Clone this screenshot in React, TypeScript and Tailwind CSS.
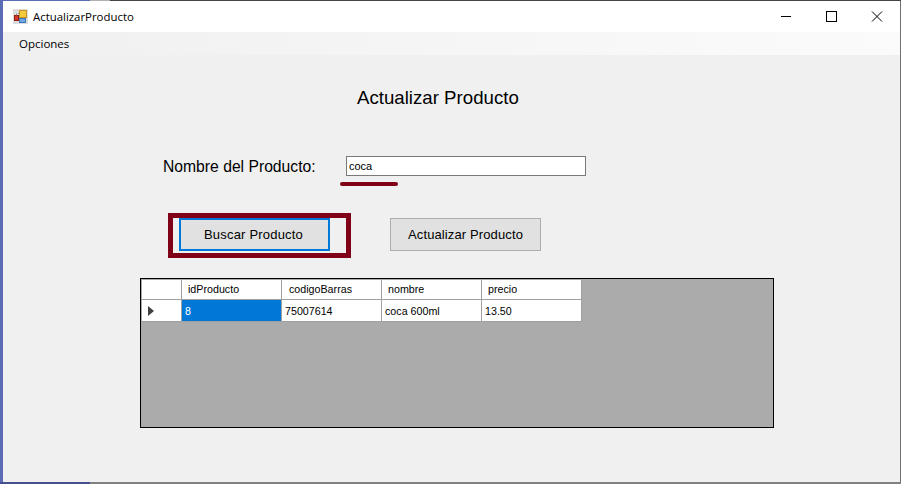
import React from 'react';

const rows = [{ id: '8', codigo: '75007614', nombre: 'coca 600ml', precio: '13.50' }];

const AppIcon = () => (
  <svg width="15" height="15" viewBox="0 0 15 15" className="shrink-0">
    <rect x="0" y="0" width="15" height="15" fill="#dcdcdc" />
    <rect x="6.5" y="1.5" width="7" height="7" fill="#f5c93c" stroke="#c9952a" />
    <rect x="1.5" y="6.5" width="4" height="5" fill="#d8342a" stroke="#8c1d18" />
    <rect x="6.5" y="9.5" width="6" height="4" fill="#6ea6e6" stroke="#3a78bd" />
    <path d="M5 4.5h1.5M3.5 4.5v2M6 11.5h1" stroke="#8a8a8a" fill="none" />
  </svg>
);

const HeaderCell = ({ label, pad = 'pl-[6px]' }: { label: string; pad?: string }) => (
  <div className={`w-[100px] h-[19px] bg-white border-r border-[#a0a0a0] flex items-center ${pad}`}>{label}</div>
);

const BodyCell = ({ value, selected }: { value: string; selected?: boolean }) => (
  <div className={`w-[100px] h-[22px] border-r border-b border-[#a0a0a0] flex items-center pl-[3px] pt-[1px] ${selected ? 'bg-[#0078d7] text-white' : 'bg-white text-black'}`}>
    {value}
  </div>
);

export default function App() {
  return (
    <div className="w-[901px] h-[484px] overflow-hidden flex flex-col bg-[#f0f0f0] text-black font-['Liberation_Sans',Arial,sans-serif]">
      <div className="h-[1px] flex shrink-0">
        <div className="w-[90px] bg-[#5b6bb5]" />
        <div className="w-[20px] bg-[#b0b0b0]" />
        <div className="flex-1 bg-[#444444]" />
      </div>
      <div className="flex-1 flex min-h-0">
        <div className="w-[3px] bg-[#5b6bb5] shrink-0" />
        <div className="flex-1 flex flex-col min-w-0">
          {/* title bar */}
          <div className="h-[31px] bg-white flex items-center shrink-0">
            <div className="ml-[10px] flex items-center">
              <AppIcon />
              <span className="ml-[5px] text-[11.4px] font-['Open_Sans',sans-serif]">ActualizarProducto</span>
            </div>
            <div className="ml-auto flex items-center text-black">
              <svg width="46" height="31" viewBox="0 0 46 31"><path d="M18 15.5h10" stroke="#000" fill="none" /></svg>
              <svg width="46" height="31" viewBox="0 0 46 31" className="ml-[-1px]"><rect x="18.5" y="10.5" width="10" height="10" stroke="#000" fill="none" /></svg>
              <svg width="46" height="31" viewBox="0 0 46 31"><path d="M18 10.5l10 10M28 10.5l-10 10" stroke="#000" fill="none" /></svg>
            </div>
          </div>
          {/* menu */}
          <div className="h-[23px] bg-gradient-to-r from-[#f0f0f0] to-[#fbfbfb] flex items-center shrink-0 pl-[16px] text-[11.5px] font-['Open_Sans',sans-serif]">
            Opciones
          </div>
          {/* form */}
          <div className="flex-1 flex flex-col min-h-0">
            <h1 className="mt-[33px] ml-[354px] h-[20px] leading-[20px] text-[18.67px] whitespace-nowrap">Actualizar Producto</h1>
            <div className="mt-[48px] flex items-start">
              <label className="ml-[160px] w-[183px] h-[20px] leading-[22px] text-[15.7px] whitespace-nowrap">Nombre del Producto:</label>
              <div className="w-[240px] h-[20px] bg-white border border-[#7a7a7a] text-[11px] leading-[18px] pl-[2px]">coca</div>
            </div>
            <div className="mt-[6px] ml-[337px] w-[58px] h-[4px] rounded-full bg-[#800018] shrink-0" />
            <div className="mt-[27px] flex items-start">
              <div className="ml-[165px] w-[183px] h-[45px] border-[5px] border-[#800018] pl-[6px]">
                <button className="block w-[151px] h-[33px] bg-[#e1e1e1] border-2 border-[#0078d7] pr-[2px] text-[13px] tracking-[0.2px]">Buscar Producto</button>
              </div>
              <button className="ml-[39px] mt-[5px] w-[151px] h-[33px] bg-[#e1e1e1] border border-[#adadad] text-[13px] tracking-[0.12px]">Actualizar Producto</button>
            </div>
            {/* grid */}
            <div className="mt-[20px] ml-[137px] w-[634px] h-[150px] bg-[#ababab] border border-black text-[10.7px] pt-[1px] pl-[1px]">
              <div className="flex">
                <div className="w-[40px] h-[19px] bg-white border-r border-[#a0a0a0]" />
                <HeaderCell label="idProducto" />
                <HeaderCell label="codigoBarras" pad="pl-[7px]" />
                <HeaderCell label="nombre" />
                <HeaderCell label="precio" />
              </div>
              {rows.map((row) => (
                <div key={row.id} className="flex w-fit border-t border-[#a0a0a0]">
                  <div className="w-[40px] h-[22px] bg-white border-r border-b border-[#a0a0a0] flex items-center pl-[6px]">
                    <svg width="6" height="10" viewBox="0 0 6 10"><path d="M0 0l6 5-6 5z" fill="#404040" /></svg>
                  </div>
                  <BodyCell value={row.id} selected />
                  <BodyCell value={row.codigo} />
                  <BodyCell value={row.nombre} />
                  <BodyCell value={row.precio} />
                </div>
              ))}
            </div>
          </div>
        </div>
        <div className="w-[1px] bg-[#707070] shrink-0" />
      </div>
      <div className="h-[2px] flex shrink-0">
        <div className="w-[90px] bg-[#46508f]" />
        <div className="flex-1 bg-[#808080]" />
      </div>
    </div>
  );
}
